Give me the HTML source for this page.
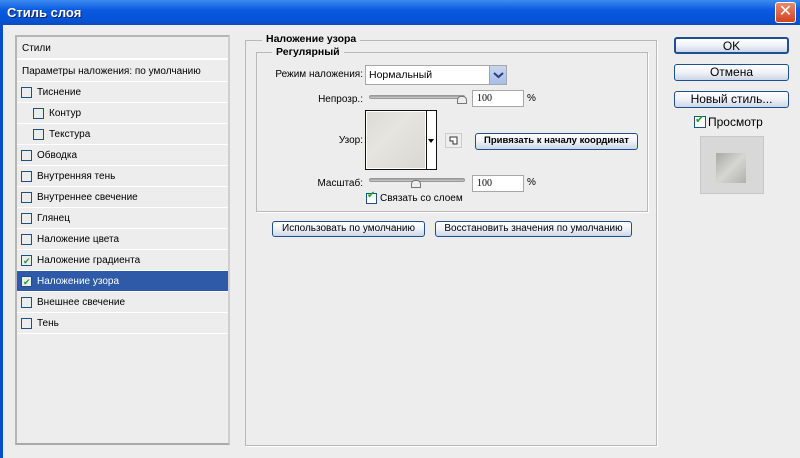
<!DOCTYPE html>
<html><head><meta charset="utf-8"><style>
*{margin:0;padding:0;box-sizing:border-box}
body{width:800px;height:458px;overflow:hidden;background:#ededed;font-family:"Liberation Sans","DejaVu Sans",sans-serif;font-size:10px;color:#000;position:relative;white-space:nowrap}
.a{position:absolute}
.lab{position:absolute;right:437px;text-align:right}
.title{left:0;top:0;width:800px;height:25px;background:linear-gradient(#3d8bf0,#0a5ae0 40%,#0553d6 80%,#0a4bc0);}
.title span{position:absolute;left:7px;top:5px;color:#fff;font-weight:bold;font-size:13px;text-shadow:1px 1px 0 #0a246a}
.close{left:775px;top:2px;width:21px;height:21px;border:1px solid #fff;border-radius:3px;background:linear-gradient(#e9896b,#d5421f);color:#fff;font-weight:bold;font-size:16px;text-align:center;line-height:18px}
.lb{left:0;top:25px;width:3px;height:433px;background:#0a4bd0}
.panel{left:15px;top:35px;width:215px;height:410px;border:2px solid #b5b5b5;border-right-color:#cfcfcf;border-bottom-color:#a9a9a9;background:#ededed}
.row{position:absolute;left:0;width:211px;height:21px;border-bottom:1px solid #fff;line-height:21px;padding-left:20px}
.row .cb{position:absolute;left:4px;top:5px;width:11px;height:11px;border:1px solid #1c5180;background:#ececec}
.row.sub{padding-left:32px}.row.sub .cb{left:16px}
.sel{background:#2e5aa8;color:#fff}
.chk::after{content:"✔";position:absolute;left:1px;top:-5px;font-size:9px;color:#21a121}
.grp{border:1px solid #b8b8b8;box-shadow:1px 1px 0 #fff}
.leg{background:#ededed;font-weight:bold;padding:0 4px;line-height:13px;font-size:10.5px}
.btn{border:1px solid #1d4f94;border-radius:3px;background:linear-gradient(#fff,#eef1f7 50%,#cdd6e6);text-align:center;line-height:14px;font-size:10px}
.rbtn{font-size:12px;line-height:15px}
.inp{background:#fff;border:1px solid #a7a7a7}
.track{height:4px;border-radius:2px;background:linear-gradient(#9a9a9a,#d0d0d0);border:1px solid #999}
.thumb{width:10px;height:8px;background:#eee;border:1px solid #777;border-radius:4px 4px 0 0}
</style></head><body>
<div class="a title"><span>Стиль слоя</span></div>
<div class="a close">✕</div>
<div class="a lb"></div>

<div class="a panel">
 <div class="row" style="top:0;height:23px;padding-left:5px;line-height:23px;border-bottom:2px solid #fff">Стили</div>
 <div class="row" style="top:24px;padding-left:5px">Параметры наложения: по умолчанию</div>
 <div class="row" style="top:45px"><i class="cb"></i>Тиснение</div>
 <div class="row sub" style="top:66px"><i class="cb"></i>Контур</div>
 <div class="row sub" style="top:87px"><i class="cb"></i>Текстура</div>
 <div class="row" style="top:108px"><i class="cb"></i>Обводка</div>
 <div class="row" style="top:129px"><i class="cb"></i>Внутренняя тень</div>
 <div class="row" style="top:150px"><i class="cb"></i>Внутреннее свечение</div>
 <div class="row" style="top:171px"><i class="cb"></i>Глянец</div>
 <div class="row" style="top:192px"><i class="cb"></i>Наложение цвета</div>
 <div class="row" style="top:213px"><i class="cb chk"></i>Наложение градиента</div>
 <div class="row sel" style="top:234px"><i class="cb chk"></i>Наложение узора</div>
 <div class="row" style="top:255px"><i class="cb"></i>Внешнее свечение</div>
 <div class="row" style="top:276px"><i class="cb"></i>Тень</div>
</div>

<div class="a grp" style="left:245px;top:40px;width:412px;height:406px"></div>
<div class="a leg" style="left:262px;top:33px">Наложение узора</div>
<div class="a grp" style="left:256px;top:52px;width:392px;height:160px"></div>
<div class="a leg" style="left:272px;top:46px">Регулярный</div>

<div class="lab" style="top:69px">Режим наложения:</div>
<div class="a inp" style="left:365px;top:65px;width:142px;height:20px;padding:3px 3px;font-size:10.5px">Нормальный</div>
<div class="a" style="left:489px;top:66px;width:17px;height:18px;background:linear-gradient(#c8d6f0,#a9bde6);border-left:1px solid #8ba3d0"><svg width="17" height="18"><path d="M4 7l4.5 4 4.5-4" stroke="#2a3f7a" stroke-width="2" fill="none"/></svg></div>

<div class="lab" style="top:94px">Непрозр.:</div>
<div class="a track" style="left:369px;top:95px;width:96px"></div>
<div class="a thumb" style="left:457px;top:96px"></div>
<div class="a inp" style="left:472px;top:90px;width:52px;height:17px;padding:2px 4px;font-family:'Liberation Serif',serif">100</div>
<div class="a" style="left:527px;top:93px">%</div>

<div class="lab" style="top:135px">Узор:</div>
<div class="a" style="left:365px;top:110px;width:72px;height:60px;border:1px solid #111;background:#fff"></div>
<div class="a" style="left:367px;top:112px;width:58px;height:56px;background:linear-gradient(135deg,#dcdbd5,#e6e5e0 40%,#d8d7d1)"></div>
<div class="a" style="left:426px;top:111px;width:1px;height:58px;background:#111"></div>
<div class="a" style="left:428px;top:139px;width:0;height:0;border:3px solid transparent;border-top:4px solid #000"></div>
<div class="a" style="left:445px;top:133px;width:17px;height:15px;border:1px solid #ccc;background:#eee"><svg width="15" height="13"><path d="M4 3h7v7H7V7H4z" stroke="#333" fill="#fff"/></svg></div>
<div class="a btn" style="left:475px;top:133px;width:163px;height:17px;font-weight:bold;font-size:9.5px">Привязать к началу координат</div>

<div class="lab" style="top:178px">Масштаб:</div>
<div class="a track" style="left:369px;top:178px;width:96px"></div>
<div class="a thumb" style="left:411px;top:180px"></div>
<div class="a inp" style="left:472px;top:175px;width:52px;height:17px;padding:2px 4px;font-family:'Liberation Serif',serif">100</div>
<div class="a" style="left:527px;top:177px">%</div>
<div class="a" style="left:366px;top:193px;width:11px;height:11px;border:1px solid #1c5180;background:#fff"></div>
<div class="a" style="left:367px;top:190px;font-size:10px;color:#21a121">✔</div>
<div class="a" style="left:380px;top:193px">Связать со слоем</div>

<div class="a btn" style="left:272px;top:221px;width:153px;height:16px">Использовать по умолчанию</div>
<div class="a btn" style="left:435px;top:221px;width:197px;height:16px">Восстановить значения по умолчанию</div>

<div class="a btn rbtn" style="left:674px;top:37px;width:115px;height:17px;border-width:2px">OK</div>
<div class="a btn rbtn" style="left:674px;top:64px;width:115px;height:17px">Отмена</div>
<div class="a btn rbtn" style="left:674px;top:91px;width:115px;height:17px">Новый стиль...</div>
<div class="a" style="left:694px;top:116px;width:12px;height:12px;border:1px solid #1c5180;background:#fff"></div>
<div class="a" style="left:695px;top:113px;font-size:11px;color:#21a121">✔</div>
<div class="a" style="left:708px;top:115px;font-size:12px">Просмотр</div>
<div class="a" style="left:700px;top:136px;width:64px;height:58px;background:#d8d8d8;border:1px solid #c8c8c8"></div>
<div class="a" style="left:716px;top:153px;width:30px;height:30px;background:linear-gradient(135deg,#a8a8a4,#d6d6d2 50%,#b0b0ac)"></div>
</body></html>
